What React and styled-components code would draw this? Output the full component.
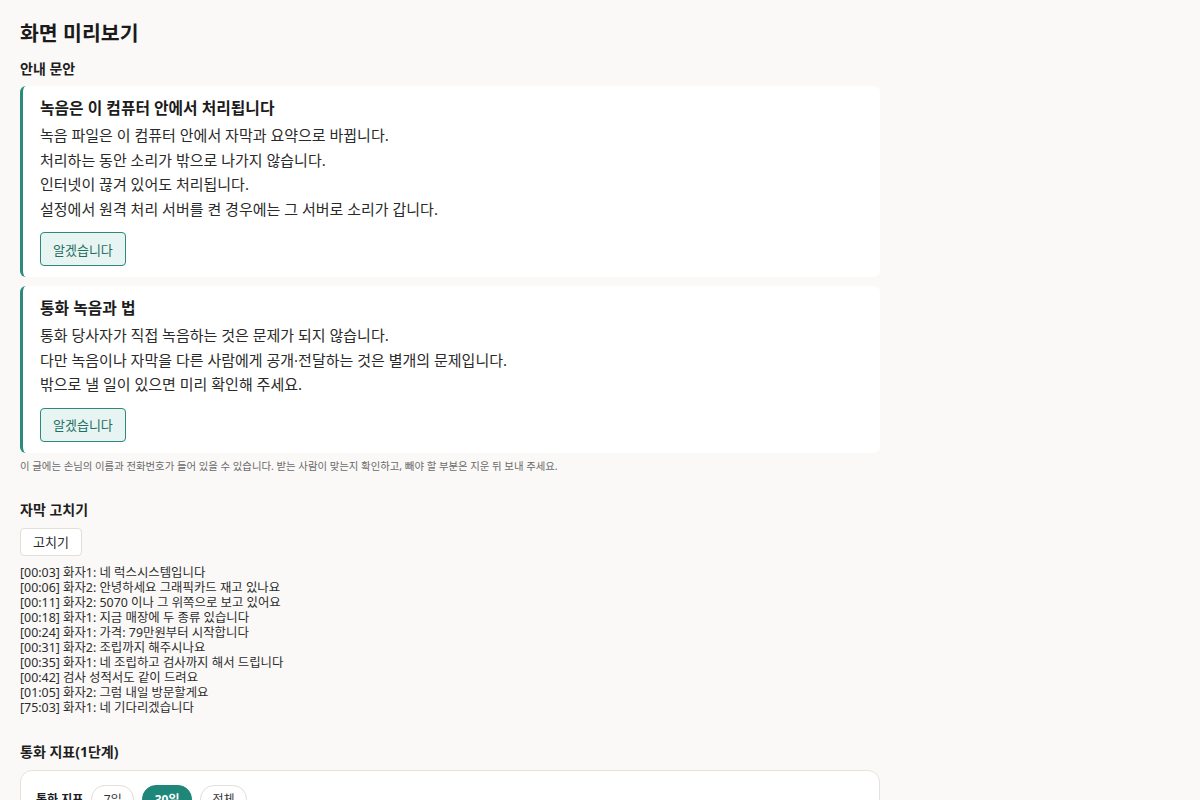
import React from "react";
import styled, { createGlobalStyle } from "styled-components";

const Global = createGlobalStyle`
  html { overflow-y: scroll; }
  html, body { margin: 0; padding: 0; background: #faf9f7; }
  body {
    font-family: "Noto Sans", "Noto Sans CJK KR", sans-serif;
    color: #222;
  }
  * { box-sizing: border-box; }
`;

const Page = styled.main`
  min-height: 4740px;
  padding: 20px 20px 40px;
`;

const Content = styled.div`
  max-width: 860px;
`;

const Title = styled.h1`
  margin: 0;
  font-size: 20.5px;
  line-height: 26px;
  font-weight: 700;
  color: #1b1b1b;
`;

const SectionTitle = styled.h2`
  margin: ${(p) => p.$top}px 0 0;
  font-size: 14px;
  line-height: 20px;
  font-weight: 700;
  color: #1e1e1e;
`;

const NoticeList = styled.div`
  display: flex;
  flex-direction: column;
  gap: 9px;
  margin-top: 7px;
`;

const Notice = styled.section`
  background: #fff;
  border-left: 3px solid #2a8a7c;
  border-radius: 6px;
  padding: 12px 17px 11px;
`;

const NoticeTitle = styled.h3`
  margin: 0;
  font-size: 15.8px;
  line-height: 20px;
  font-weight: 700;
  color: #1c1c1c;
`;

const NoticeBody = styled.div`
  margin-top: 5px;
  font-size: 15px;
  line-height: 24.5px;
  color: #2a2a2a;
`;

const Line = styled.span`
  display: block;
`;

const AckButton = styled.button`
  margin-top: 11px;
  height: 34px;
  padding: 0 12px;
  border: 1px solid #2a8a7c;
  border-radius: 4px;
  background: #e7f4f1;
  color: #1f6f64;
  font-family: inherit;
  font-size: 13px;
  cursor: pointer;
`;

const Note = styled.p`
  margin: 6px 0 0;
  font-size: 10.4px;
  line-height: 15px;
  color: #6a6a6a;
`;

const PlainButton = styled.button`
  display: block;
  margin-top: 8px;
  height: 28px;
  padding: 0 12px;
  border: 1px solid #e2ded8;
  border-radius: 4px;
  background: #fff;
  color: #2a2a2a;
  font-family: inherit;
  font-size: 13px;
  cursor: pointer;
`;

const Transcript = styled.div`
  margin-top: 9px;
  font-size: 12.4px;
  line-height: 15px;
  color: #2c2c2c;
`;

const MetricCard = styled.section`
  margin-top: 8px;
  background: #fff;
  border: 1px solid #e7e2dc;
  border-radius: 12px;
  padding: 14px 15px 18px;
`;

const MetricHeader = styled.div`
  display: flex;
  align-items: center;
  gap: 8px;
`;

const MetricLabel = styled.span`
  font-size: 12px;
  font-weight: 700;
  color: #1e1e1e;
`;

const Pill = styled.button`
  height: 28px;
  padding: 0 11.5px;
  border-radius: 999px;
  border: 1px solid ${(p) => (p.$active ? "#1f877a" : "#e2ded8")};
  background: ${(p) => (p.$active ? "#1f877a" : "#fff")};
  color: ${(p) => (p.$active ? "#fff" : "#333")};
  font-family: inherit;
  font-size: 12px;
  font-weight: ${(p) => (p.$active ? 700 : 400)};
  cursor: pointer;
`;

const StatGrid = styled.div`
  margin-top: 16px;
  display: grid;
  grid-template-columns: repeat(4, 1fr);
  gap: 10px;
`;

const Stat = styled.div`
  border: 1px solid #eee9e3;
  border-radius: 8px;
  padding: 10px 12px;
`;

const StatName = styled.div`
  font-size: 11px;
  color: #777;
`;

const StatValue = styled.div`
  margin-top: 4px;
  font-size: 18px;
  font-weight: 700;
  color: #1e1e1e;
`;

const notices = [
  {
    title: "녹음은 이 컴퓨터 안에서 처리됩니다",
    lines: [
      "녹음 파일은 이 컴퓨터 안에서 자막과 요약으로 바뀝니다.",
      "처리하는 동안 소리가 밖으로 나가지 않습니다.",
      "인터넷이 끊겨 있어도 처리됩니다.",
      "설정에서 원격 처리 서버를 켠 경우에는 그 서버로 소리가 갑니다.",
    ],
  },
  {
    title: "통화 녹음과 법",
    lines: [
      "통화 당사자가 직접 녹음하는 것은 문제가 되지 않습니다.",
      "다만 녹음이나 자막을 다른 사람에게 공개·전달하는 것은 별개의 문제입니다.",
      "밖으로 낼 일이 있으면 미리 확인해 주세요.",
    ],
  },
];

const transcript = [
  "[00:03] 화자1: 네 럭스시스템입니다",
  "[00:06] 화자2: 안녕하세요 그래픽카드 재고 있나요",
  "[00:11] 화자2: 5070 이나 그 위쪽으로 보고 있어요",
  "[00:18] 화자1: 지금 매장에 두 종류 있습니다",
  "[00:24] 화자1: 가격: 79만원부터 시작합니다",
  "[00:31] 화자2: 조립까지 해주시나요",
  "[00:35] 화자1: 네 조립하고 검사까지 해서 드립니다",
  "[00:42] 검사 성적서도 같이 드려요",
  "[01:05] 화자2: 그럼 내일 방문할게요",
  "[75:03] 화자1: 네 기다리겠습니다",
];

const stats = [
  ["통화 수", "128"],
  ["평균 통화 시간", "3분 12초"],
  ["부재중", "9"],
  ["재방문 약속", "21"],
];

export default function App() {
  return (
    <>
      <Global />
      <Page>
        <Content>
          <Title>화면 미리보기</Title>
          <SectionTitle $top={13}>안내 문안</SectionTitle>
          <NoticeList>
            {notices.map((n) => (
              <Notice key={n.title}>
                <NoticeTitle>{n.title}</NoticeTitle>
                <NoticeBody>
                  {n.lines.map((l) => (
                    <Line key={l}>{l}</Line>
                  ))}
                </NoticeBody>
                <AckButton>알겠습니다</AckButton>
              </Notice>
            ))}
          </NoticeList>
          <Note>
            이 글에는 손님의 이름과 전화번호가 들어 있을 수 있습니다. 받는 사람이 맞는지 확인하고, 빼야 할 부분은 지운 뒤 보내 주세요.
          </Note>

          <SectionTitle $top={26}>자막 고치기</SectionTitle>
          <PlainButton>고치기</PlainButton>
          <Transcript>
            {transcript.map((t) => (
              <Line key={t}>{t}</Line>
            ))}
          </Transcript>

          <SectionTitle $top={27}>통화 지표(1단계)</SectionTitle>
          <MetricCard>
            <MetricHeader>
              <MetricLabel>통화 지표</MetricLabel>
              <Pill>7일</Pill>
              <Pill $active>30일</Pill>
              <Pill>전체</Pill>
            </MetricHeader>
            <StatGrid>
              {stats.map(([k, v]) => (
                <Stat key={k}>
                  <StatName>{k}</StatName>
                  <StatValue>{v}</StatValue>
                </Stat>
              ))}
            </StatGrid>
          </MetricCard>
        </Content>
      </Page>
    </>
  );
}
